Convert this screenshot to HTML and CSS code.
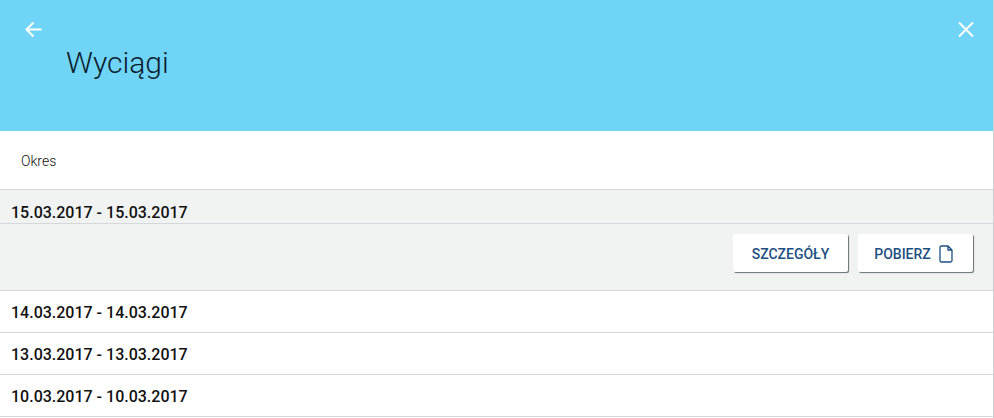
FILE: index.html
```
<!DOCTYPE html>
<html lang="pl">
<head>
    <meta charset="UTF-8">
    <meta name="viewport" content="width=device-width, initial-scale=1.0">
    <title>Wyciągi</title>
    <link rel="stylesheet" href="styles.css">
</head>
<body>
    <div class="panel">
        <header class="panel-header">
            <div class="toolbar">
                <button type="button" class="icon-btn" aria-label="Wstecz">
                    <svg width="24" height="24" viewBox="0 0 24 24"><path d="M20.500 12.500H6M12.500 5.500l-7 7 7 7" /></svg>
                </button>
                <button type="button" class="icon-btn" aria-label="Zamknij">
                    <svg width="24" height="24" viewBox="0 0 24 24"><path d="M5 5.500l14 14M19 5.500L5 19.500" /></svg>
                </button>
            </div>
            <h1>Wyciągi</h1>
        </header>
        <table class="statements">
            <thead>
                <tr><th scope="col">Okres</th></tr>
            </thead>
            <tbody>
                <tr class="selected"><td>15.03.2017 - 15.03.2017</td></tr>
                <tr class="details">
                    <td>
                        <div class="actions">
                            <button type="button" class="btn">SZCZEGÓŁY</button>
                            <button type="button" class="btn">
                                POBIERZ
                                <svg width="14" height="18" viewBox="0 0 14 18"><path d="M2.500 1H9l4 4v10.500a1.500 1.500 0 0 1-1.500 1.500h-9A1.500 1.500 0 0 1 1 15.500v-13A1.500 1.500 0 0 1 2.500 1zM9 1v4h4" /></svg>
                            </button>
                        </div>
                    </td>
                </tr>
                <tr><td>14.03.2017 - 14.03.2017</td></tr>
                <tr><td>13.03.2017 - 13.03.2017</td></tr>
                <tr><td>10.03.2017 - 10.03.2017</td></tr>
            </tbody>
        </table>
    </div>
</body>
</html>
```
FILE: styles.css
```
body {
    margin: 0;
    font-family: Roboto, sans-serif;
    color: #111;
    background-color: #fff;
}

.panel {
    box-sizing: border-box;
    min-height: 100vh;
    border-right: 1px solid #ccd2d5;
}

.panel-header {
    padding: 17px 15px 48px 21px;
    background-color: #70d4f7;
}

.toolbar {
    display: flex;
    justify-content: space-between;
}

.icon-btn {
    display: flex;
    padding: 0;
    border: none;
    background: none;
    cursor: pointer;
}

.icon-btn svg {
    fill: none;
    stroke: #fff;
    stroke-width: 2;
}

h1 {
    margin: 2px 0 0 45px;
    font-size: 30px;
    font-weight: 300;
    line-height: 40px;
    color: #0c1c2c;
}

.statements {
    width: 100%;
    border-spacing: 0;
}

.statements th,
.statements td {
    border-bottom: 1px solid #d5d8da;
    text-align: left;
}

.statements th {
    padding: 20px 21px 18px;
    font-size: 14px;
    font-weight: 300;
    line-height: 20px;
}

.statements td {
    padding: 12px 11px 9px;
    font-size: 16px;
    font-weight: 500;
    line-height: 20px;
}

.statements .selected td,
.statements .details td {
    background-color: #f1f3f3;
}

.statements .selected td {
    padding: 13px 11px 0;
}

.statements .details td {
    padding: 10px 20px 18px;
}

.actions {
    display: flex;
    justify-content: flex-end;
    gap: 10px;
}

.btn {
    display: flex;
    align-items: center;
    justify-content: center;
    gap: 8px;
    min-width: 115px;
    height: 38px;
    padding: 2px 16px 0;
    border: none;
    border-radius: 2px;
    background-color: #fff;
    box-shadow: 1px 1px 1px #66706f;
    font-family: inherit;
    font-size: 14px;
    font-weight: 500;
    color: #1c4f80;
    cursor: pointer;
}

.btn svg {
    margin-right: 4px;
    fill: none;
    stroke: #1c4f80;
    stroke-width: 1.3;
}
```
